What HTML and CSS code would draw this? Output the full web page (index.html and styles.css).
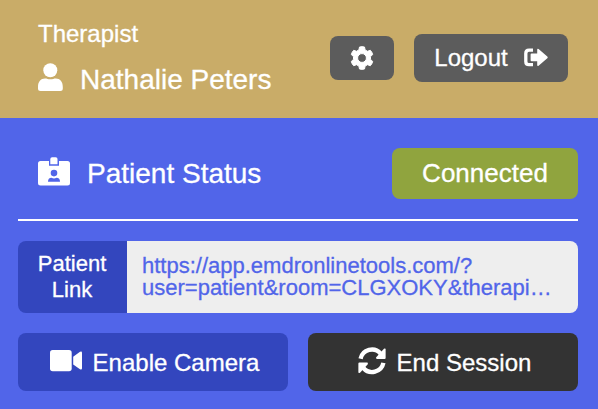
FILE: index.html
```html
<!DOCTYPE html>
<html lang="en">
<head>
  <meta charset="UTF-8">
  <title>Therapist Session</title>
  <link rel="stylesheet" href="styles.css">
</head>
<body>
  <div class="header">
    <div class="therapist">
      <div class="role">Therapist</div>
      <div class="name">
        <svg width="25" height="29" viewBox="0 0 25 29" fill="currentColor">
          <circle cx="12.3" cy="7.3" r="7"/>
          <path d="M0 24 C0 18.5 2.8 15.5 7 15.5 C9 15.5 10 16.3 12.4 16.3 C14.8 16.3 15.8 15.5 17.8 15.5 C22 15.5 24.8 18.5 24.8 24 V25.5 Q24.8 28 22.3 28 H2.5 Q0 28 0 25.5 Z"/>
        </svg>
        <span>Nathalie Peters</span>
      </div>
    </div>
    <button class="settings" aria-label="Settings">
      <svg width="24" height="24" viewBox="0 0 24 24" fill="currentColor">
        <path fill-rule="evenodd" stroke="currentColor" stroke-width="1" stroke-linejoin="round" d="M9.5 1 Q12 .3 14.5 1 L15.1 3.9 L17.5 5.3 L20.3 4.3 Q22.2 6.2 22.7 8.6 L20.5 10.6 V13.4 L22.7 15.4 Q22.2 17.8 20.3 19.7 L17.5 18.7 L15.1 20.1 L14.5 23 Q12 23.7 9.5 23 L8.9 20.1 L6.5 18.7 L3.7 19.7 Q1.8 17.8 1.3 15.4 L3.5 13.4 V10.6 L1.3 8.6 Q1.8 6.2 3.7 4.3 L6.5 5.3 L8.9 3.9 Z M12 7.6 A4.4 4.4 0 1 0 12 16.4 A4.4 4.4 0 1 0 12 7.6 Z"/>
      </svg>
    </button>
    <button class="logout">
      Logout
      <svg width="24" height="20" viewBox="0 0 24 20" fill="currentColor">
        <path d="M9 2.2 H5 Q1.8 2.2 1.8 5.4 V13.4 Q1.8 16.6 5 16.6 H9" fill="none" stroke="currentColor" stroke-width="3.3"/>
        <path d="M7.6 5.6 H13.2 V1.7 Q13.3 .3 14.6 1.1 L23.3 8.6 Q24.1 9.4 23.3 10.2 L14.6 17.7 Q13.3 18.5 13.2 17.1 V13.2 H7.6 Q6.6 13.2 6.6 12.2 V6.6 Q6.6 5.6 7.6 5.6 Z"/>
      </svg>
    </button>
  </div>

  <div class="session">
    <div class="status">
      <svg width="32" height="29" viewBox="0 0 32 29" fill="currentColor">
        <path fill-rule="evenodd" d="M2.5 4 H11 V8.7 H21 V4 H29.5 Q32 4 32 6.5 V26 Q32 28.5 29.5 28.5 H2.5 Q0 28.5 0 26 V6.5 Q0 4 2.5 4 Z M16 12.8 A3.3 3.3 0 1 0 16 19.4 A3.3 3.3 0 1 0 16 12.8 Z M10 24.8 H22 Q22 21 18.5 20.8 Q16 22 13.5 20.8 Q10 21 10 24.8 Z"/>
        <path d="M12.3 7.2 V2 Q12.3 .2 14.1 .2 H17.7 Q19.5 .2 19.5 2 V7.2 Z"/>
      </svg>
      <span class="status-title">Patient Status</span>
      <span class="badge">Connected</span>
    </div>

    <div class="link">
      <div class="link-label">Patient<br>Link</div>
      <div class="link-url">https://app.emdronlinetools.com/?<br>user=patient&amp;room=CLGXOKY&amp;therapi…</div>
    </div>

    <div class="actions">
      <button class="camera">
        <svg width="32" height="22" viewBox="0 0 32 22" fill="currentColor">
          <rect x="0" y="0" width="21.7" height="21.3" rx="2.7"/>
          <path d="M23.2 6.7 L30 1.8 Q32 .7 32 2.8 V18.2 Q32 20.3 30 19.3 L23.2 14.5 Z"/>
        </svg>
        Enable Camera
      </button>
      <button class="end">
        <svg width="28" height="28" viewBox="0 0 28 28" fill="currentColor">
          <path d="M2.6 11.7 A11.5 11.5 0 0 1 22.6 6.6" fill="none" stroke="currentColor" stroke-width="4.4"/>
          <path d="M25.4 15.9 A11.5 11.5 0 0 1 5.4 21" fill="none" stroke="currentColor" stroke-width="4.4"/>
          <path d="M27.6 1.8 V11 Q27.6 12 26.6 12 H18.5 L18 10.5 L26.2 1.6 Z"/>
          <path d="M.4 25.8 V16.6 Q.4 15.6 1.4 15.6 H9.5 L10 17.1 L1.8 26 Z"/>
        </svg>
        End Session
      </button>
    </div>
  </div>
</body>
</html>
```

FILE: styles.css
```css
* {
  box-sizing: border-box;
}
body {
  margin: 0;
  height: 409px;
  overflow: hidden;
  background: #5165e9;
  font-family: "Liberation Sans", Arial, Helvetica, sans-serif;
  -webkit-text-stroke: 0.3px;
  color: #fff;
}
svg {
  display: block;
  flex: none;
}
button {
  display: flex;
  align-items: center;
  justify-content: center;
  padding: 0;
  border: none;
  border-radius: 8px;
  color: #fff;
  font-family: inherit;
  font-size: 24px;
  cursor: pointer;
}

/* Therapist bar */
.header {
  display: flex;
  align-items: center;
  height: 118px;
  padding: 0 30px 2px 38px;
  background: #c9ac68;
}
.therapist {
  flex: 1;
  padding-top: 1px;
}
.role {
  font-size: 24px;
  line-height: 28px;
}
.name {
  display: flex;
  align-items: center;
  gap: 17px;
  height: 34px;
  margin-top: 15px;
  font-size: 28px;
}
.name svg {
  margin-bottom: 6px;
}
.settings {
  width: 64px;
  height: 44px;
  background: #5c5c5c;
}
.logout {
  width: 154px;
  height: 48px;
  margin-left: 20px;
  gap: 16px;
  background: #5c5c5c;
}

/* Session panel */
.session {
  padding: 30px 20px 18px 18px;
}
.status {
  display: flex;
  align-items: center;
  height: 73px;
  padding: 0 0 20px 20px;
  border-bottom: 2px solid #fff;
}
.status svg {
  margin-bottom: 4px;
}
.status-title {
  flex: 1;
  margin-left: 17px;
  font-size: 28px;
}
.badge {
  width: 186px;
  height: 51px;
  border-radius: 8px;
  background: #90a43e;
  font-size: 26px;
  line-height: 50px;
  text-align: center;
}
.link {
  display: flex;
  height: 72px;
  margin-top: 20px;
  border-radius: 8px;
  overflow: hidden;
  font-size: 22px;
}
.link-label {
  width: 109px;
  padding: 10px 1px 0 0;
  background: #3346be;
  line-height: 26px;
  text-align: center;
}
.link-url {
  flex: 1;
  padding: 14px 0 0 15px;
  background: #eee;
  color: #5165e9;
  line-height: 22px;
  white-space: nowrap;
}
.actions {
  display: flex;
  gap: 20px;
  margin-top: 20px;
}
.actions button {
  flex: 1;
  height: 58px;
  padding: 2px 0 0 3px;
  gap: 11px;
}
.actions svg {
  margin-bottom: 4px;
}
.camera {
  background: #3346be;
}
.end {
  background: #333;
}
```
